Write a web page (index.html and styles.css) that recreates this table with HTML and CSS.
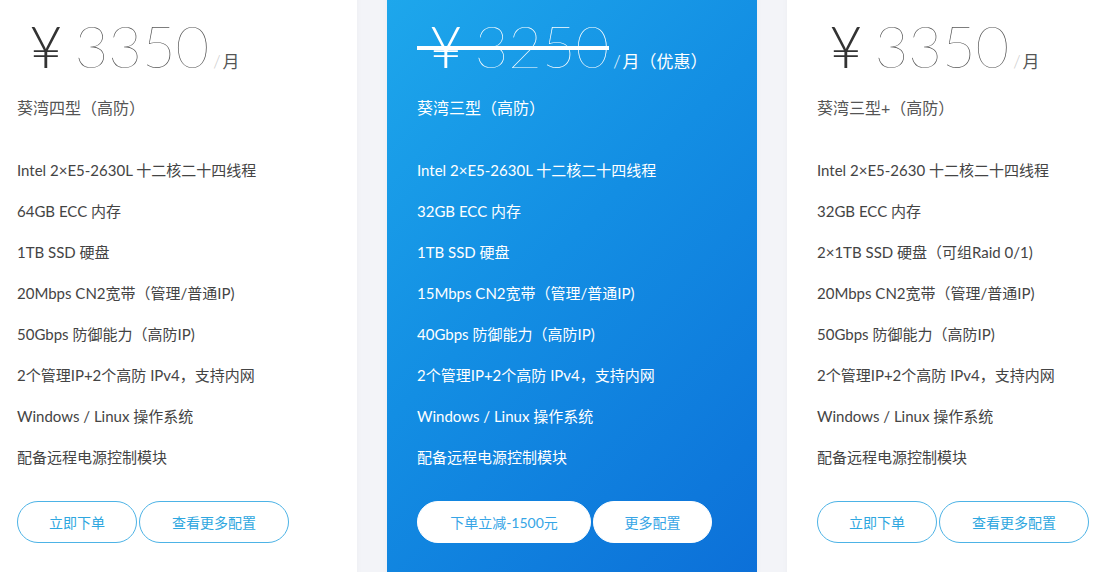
FILE: index.html
```html
<!DOCTYPE html>
<html lang="zh">
<head>
<meta charset="utf-8">
<title>Pricing</title>
<link rel="stylesheet" href="styles.css">
</head>
<body>
<div class="plans">
  <div class="card">
    <div class="price"><span class="amount"><span class="yen">¥</span><span class="num">3350</span></span><span class="unit"><span class="slash">/</span>月</span></div>
    <div class="name">葵湾四型（高防）</div>
    <ul class="specs">
      <li>Intel 2×E5-2630L 十二核二十四线程</li>
      <li>64GB ECC 内存</li>
      <li>1TB SSD 硬盘</li>
      <li>20Mbps CN2宽带（管理/普通IP)</li>
      <li>50Gbps 防御能力（高防IP)</li>
      <li>2个管理IP+2个高防 IPv4，支持内网</li>
      <li>Windows / Linux 操作系统</li>
      <li>配备远程电源控制模块</li>
    </ul>
    <div class="actions">
      <a class="btn w120">立即下单</a>
      <a class="btn w150">查看更多配置</a>
    </div>
  </div>
  <div class="card featured">
    <div class="price"><span class="amount strike"><span class="yen">¥</span><span class="num">3250</span></span><span class="unit"><span class="slash">/</span>月（优惠）</span></div>
    <div class="name">葵湾三型（高防）</div>
    <ul class="specs">
      <li>Intel 2×E5-2630L 十二核二十四线程</li>
      <li>32GB ECC 内存</li>
      <li>1TB SSD 硬盘</li>
      <li>15Mbps CN2宽带（管理/普通IP)</li>
      <li>40Gbps 防御能力（高防IP)</li>
      <li>2个管理IP+2个高防 IPv4，支持内网</li>
      <li>Windows / Linux 操作系统</li>
      <li>配备远程电源控制模块</li>
    </ul>
    <div class="actions">
      <a class="btn w174">下单立减-1500元</a>
      <a class="btn w119">更多配置</a>
    </div>
  </div>
  <div class="card">
    <div class="price"><span class="amount"><span class="yen">¥</span><span class="num">3350</span></span><span class="unit"><span class="slash">/</span>月</span></div>
    <div class="name">葵湾三型+（高防）</div>
    <ul class="specs">
      <li>Intel 2×E5-2630 十二核二十四线程</li>
      <li>32GB ECC 内存</li>
      <li>2×1TB SSD 硬盘（可组Raid 0/1)</li>
      <li>20Mbps CN2宽带（管理/普通IP)</li>
      <li>50Gbps 防御能力（高防IP)</li>
      <li>2个管理IP+2个高防 IPv4，支持内网</li>
      <li>Windows / Linux 操作系统</li>
      <li>配备远程电源控制模块</li>
    </ul>
    <div class="actions">
      <a class="btn w120">立即下单</a>
      <a class="btn w150">查看更多配置</a>
    </div>
  </div>
</div>
</body>
</html>
```
FILE: styles.css
```css
html, body {
  margin: 0;
  padding: 0;
  width: 1106px;
  height: 572px;
  overflow: hidden;
  background: #f3f4f8;
  font-family: "Lato", "Noto Sans CJK SC", sans-serif;
}
.plans {
  display: flex;
  gap: 30px;
  margin-left: -13px;
  margin-top: -20px;
}
.card {
  flex: 0 0 370px;
  box-sizing: border-box;
  width: 370px;
  height: 610px;
  padding: 30px 30px 0;
  background: #fff;
  color: #444;
  box-shadow: 0 0 6px rgba(0, 0, 0, 0.03);
}
.featured {
  background: linear-gradient(135deg, #1ea8ec 0%, #138ee3 45%, #0c6fd8 100%);
  color: #fff;
}
.price {
  display: flex;
  align-items: baseline;
  height: 72px;
  line-height: 72px;
}
.amount {
  position: relative;
  display: inline-flex;
  align-items: baseline;
}
.yen {
  font-family: "Lato", sans-serif;
  font-weight: 300;
  font-size: 58px;
  color: #333;
  margin-left: 12px;
  margin-right: 12px;
}
.num {
  font-family: "Lato", sans-serif;
  font-weight: 100;
  font-size: 58px;
  color: #555;
}
.featured .yen, .featured .num { color: #fff; }
.strike::after {
  content: "";
  position: absolute;
  left: 0;
  right: 0;
  top: 50%;
  height: 4px;
  background: #fff;
}
.unit {
  font-family: "Noto Sans CJK SC", sans-serif;
  font-size: 17px;
  color: #555;
  margin-left: 4px;
}
.slash {
  color: #ccc;
  font-family: "Lato", sans-serif;
  font-weight: 300;
  margin-right: 2px;
}
.featured .unit, .featured .slash { color: #fff; }
.name {
  font-size: 16px;
  color: #555;
  margin-top: 14px;
  line-height: 24px;
}
.featured .name { color: #fff; }
.specs {
  list-style: none;
  margin: 30px 0 0;
  padding: 0;
}
.specs li {
  font-size: 15px;
  line-height: 41px;
}
.actions {
  display: flex;
  gap: 2px;
  margin-top: 23px;
}
.btn {
  box-sizing: border-box;
  height: 42px;
  border: 1px solid #4db3e6;
  border-radius: 21px;
  display: flex;
  align-items: center;
  justify-content: center;
  font-size: 14px;
  color: #2ea7e0;
  background: #fff;
}
.featured .btn {
  border-color: #fff;
  color: #36a5e6;
}
.w120 { width: 120px; }
.w150 { width: 150px; }
.w174 { width: 174px; }
.w119 { width: 119px; }
```
